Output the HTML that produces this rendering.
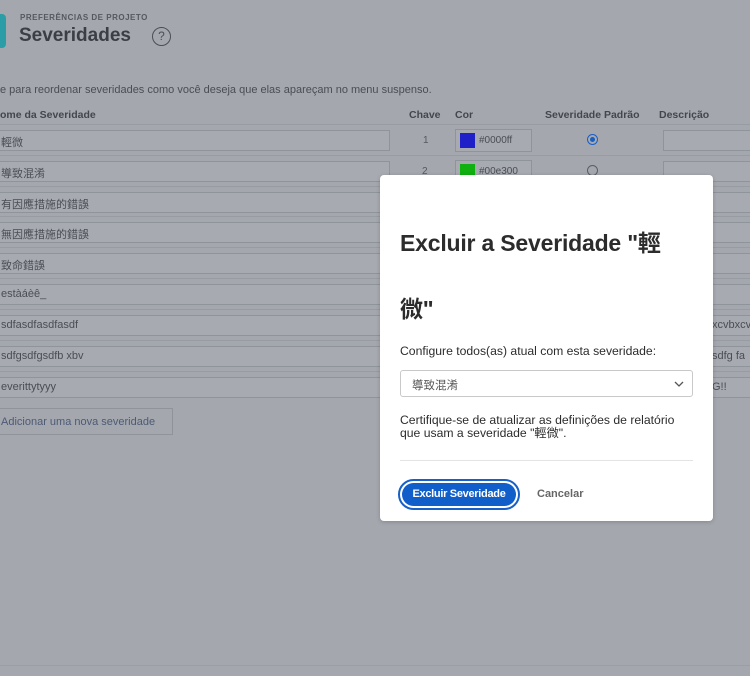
<!DOCTYPE html>
<html><head><meta charset="utf-8"><style>
*{box-sizing:border-box;margin:0;padding:0}
body{width:750px;height:676px;overflow:hidden;background:#a4a8ae;font-family:"Liberation Sans","Noto Sans CJK TC",sans-serif;position:relative;color:#3e4148}
.abs{position:absolute}
.inp{position:absolute;height:21px;border:1px solid #8f949b;background:#a7abb1;font-size:11px;color:#4a4d53;padding:3px 0 0 2px;white-space:nowrap;overflow:hidden}
.line{position:absolute;left:0;width:750px;height:1px;background:#979ba2}
.hd{position:absolute;top:109px;font-size:10.5px;font-weight:bold;color:#43464c}
.modal{position:absolute;left:380px;top:175px;width:333px;height:346px;background:#fff;border-radius:4px;box-shadow:0 1px 4px rgba(0,0,0,.2)}
</style></head><body>
<div class="abs" style="left:-8px;top:14px;width:14px;height:34px;background:#2b9da6;border-radius:4px"></div>
<div class="abs" style="left:20px;top:13px;font-size:8px;font-weight:bold;letter-spacing:.5px;color:#55595f">PREFERÊNCIAS DE PROJETO</div>
<div class="abs" style="left:19px;top:25px;font-size:19px;font-weight:bold;color:#3b3e44">Severidades</div>
<div class="abs" style="left:152px;top:27px;width:19px;height:19px;border:1px solid #4b4f55;border-radius:50%;font-size:12px;text-align:center;line-height:17px;color:#4b4f55">?</div>
<div class="abs" style="left:0;top:84px;font-size:11px;color:#4a4d53">e para reordenar severidades como você deseja que elas apareçam no menu suspenso.</div>
<div class="hd" style="left:0">ome da Severidade</div>
<div class="hd" style="left:409px">Chave</div>
<div class="hd" style="left:455px">Cor</div>
<div class="hd" style="left:545px">Severidade Padrão</div>
<div class="hd" style="left:659px">Descrição</div>

<div class="line" style="top:124px"></div>
<div class="inp" style="left:-2px;top:130px;width:392px">輕微</div>
<div class="abs" style="left:423px;top:135px;font-size:10px;color:#55595f">1</div>
<div class="inp" style="left:455px;top:129px;width:77px;height:23px;padding:0"><span class="abs" style="left:4px;top:3px;width:15px;height:15px;background:#2020c8"></span><span class="abs" style="left:23px;top:5px;font-size:10px">#0000ff</span></div>
<div class="abs" style="left:587px;top:134px;width:11px;height:11px;border-radius:50%;border:1px solid #1a5fc4;background:#a7abb1"><div style="margin:2px;width:5px;height:5px;border-radius:50%;background:#1a5fc4"></div></div>
<div class="inp" style="left:663px;top:130px;width:100px"></div>

<div class="line" style="top:155px"></div>
<div class="inp" style="left:-2px;top:161px;width:392px">導致混淆</div>
<div class="abs" style="left:422px;top:166px;font-size:10px;color:#55595f">2</div>
<div class="inp" style="left:455px;top:160px;width:77px;height:23px;padding:0"><span class="abs" style="left:4px;top:3px;width:15px;height:15px;background:#10b010"></span><span class="abs" style="left:23px;top:5px;font-size:10px">#00e300</span></div>
<div class="abs" style="left:587px;top:165px;width:11px;height:11px;border-radius:50%;border:1px solid #5a5e64"></div>
<div class="inp" style="left:663px;top:161px;width:100px"></div>

<div class="line" style="top:186px"></div>
<div class="inp" style="left:-2px;top:192px;width:760px">有因應措施的錯誤</div>
<div class="line" style="top:216px"></div>
<div class="inp" style="left:-2px;top:222px;width:760px">無因應措施的錯誤</div>
<div class="line" style="top:247px"></div>
<div class="inp" style="left:-2px;top:253px;width:760px">致命錯誤</div>
<div class="line" style="top:278px"></div>
<div class="inp" style="left:-2px;top:284px;width:760px">estàáèê_</div>
<div class="line" style="top:309px"></div>
<div class="inp" style="left:-2px;top:315px;width:392px">sdfasdfasdfasdf</div>
<div class="inp" style="left:663px;top:315px;width:100px;padding-left:48px">xcvbxcv</div>
<div class="line" style="top:340px"></div>
<div class="inp" style="left:-2px;top:346px;width:392px">sdfgsdfgsdfb xbv</div>
<div class="inp" style="left:663px;top:346px;width:100px;padding-left:48px">sdfg  fa</div>
<div class="line" style="top:371px"></div>
<div class="inp" style="left:-2px;top:377px;width:392px">everittytyyy</div>
<div class="inp" style="left:663px;top:377px;width:100px;padding-left:48px">G!!</div>
<div class="abs" style="left:-4px;top:408px;width:177px;height:27px;border:1px solid #8f949b;font-size:11px;color:#4d5a75;padding:7px 0 0 4px">Adicionar uma nova severidade</div>
<div class="line" style="top:665px;background:#9a9ea5"></div>

<div class="modal">
<div class="abs" style="left:20px;top:35px;width:300px;font-size:23px;font-weight:bold;line-height:66px;color:#2c2c2c;letter-spacing:-.2px">Excluir a Severidade "輕<br>微"</div>
<div class="abs" style="left:20px;top:169px;font-size:12.2px;color:#2c2c2c">Configure todos(as) atual com esta severidade:</div>
<div class="abs" style="left:20px;top:195px;width:293px;height:27px;border:1px solid #c9c9c9;border-radius:3px;font-size:11.5px;color:#555;padding:6px 0 0 11px">導致混淆
<svg class="abs" style="right:8px;top:10px" width="10" height="6" viewBox="0 0 10 6"><path d="M1 1l4 4 4-4" fill="none" stroke="#555" stroke-width="1.3"/></svg></div>
<div class="abs" style="left:20px;top:239px;width:285px;font-size:12.2px;line-height:13px;color:#2c2c2c">Certifique-se de atualizar as definições de relatório que usam a severidade "輕微".</div>
<div class="abs" style="left:20px;top:285px;width:293px;height:1px;background:#e3e3e3"></div>
<div class="abs" style="left:18px;top:304px;width:122px;height:31px;border:2px solid #1660c8;border-radius:16px;padding:2px"><div style="width:100%;height:100%;background:#0f5ec9;border-radius:13px;color:#fff;font-size:11px;font-weight:bold;text-align:center;line-height:23px;letter-spacing:-.3px">Excluir Severidade</div></div>
<div class="abs" style="left:157px;top:313px;font-size:11px;font-weight:bold;color:#666">Cancelar</div>
</div>
</body></html>
